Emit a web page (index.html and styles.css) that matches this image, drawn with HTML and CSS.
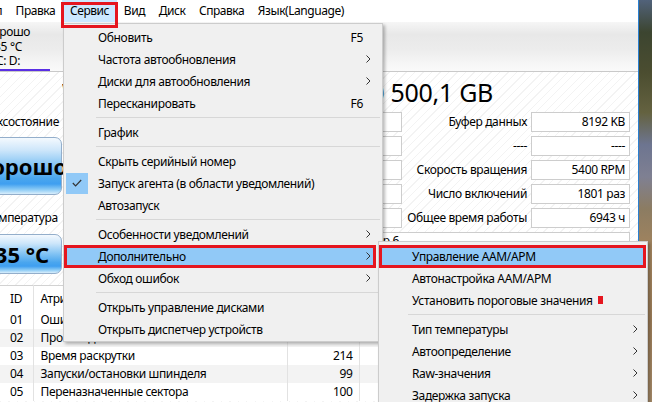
FILE: index.html
```html
<!DOCTYPE html>
<html lang="ru">
<head>
<meta charset="utf-8">
<title>CrystalDiskInfo</title>
<link rel="stylesheet" href="styles.css">
</head>
<body>
<div class="screen">
  <div class="window">
    <div class="menubar">
      <span class="mi first">Файл</span>
      <span class="mi">Правка</span>
      <span class="mi active">Сервис</span>
      <span class="mi">Вид</span>
      <span class="mi">Диск</span>
      <span class="mi">Справка</span>
      <span class="mi">Язык(Language)</span>
    </div>
    <div class="toolbar">
      <div class="disk">
        <span>Хорошо</span>
        <span>35 °C</span>
        <span>C: D:</span>
        <div class="bar"></div>
      </div>
    </div>
    <div class="main">
      <div class="top">
        <div class="status">
          <div class="slabel">Техсостояние</div>
          <div class="sbtn big">Хорошо</div>
          <div class="slabel t2">Температура</div>
          <div class="sbtn temp">35 °C</div>
        </div>
        <div class="info">
          <div class="title">WDC WD5000LPVX-22V0TT0 500,1 GB</div>
          <div class="grid">
            <div class="lab">Прошивка</div><div class="box c">01.01A01</div><div class="lab">Буфер данных</div><div class="box r">8192 KB</div>
            <div class="lab">Серийный номер</div><div class="box c">WD-WX11A1234567</div><div class="lab">----</div><div class="box r">----</div>
            <div class="lab">Интерфейс</div><div class="box c">Serial ATA</div><div class="lab">Скорость вращения</div><div class="box r">5400 RPM</div>
            <div class="lab">Режим передачи</div><div class="box c">SATA/600</div><div class="lab">Число включений</div><div class="box r">1801 раз</div>
            <div class="lab">Буква тома</div><div class="box c">C: D:</div><div class="lab">Общее время работы</div><div class="box r">6943 ч</div>
            <div class="lab">Стандарт</div><div class="box wide"><span class="clip">ATA8-ACS | ATA8-ACS вер 6</span></div>
          </div>
        </div>
      </div>
      <table class="smart">
        <colgroup><col class="c-id"><col class="c-attr"><col class="c-num"><col class="c-num"><col class="c-num"><col></colgroup>
        <thead>
          <tr><th>ID</th><th>Атрибут</th><th>Текущее</th><th>Наихудшее</th><th>Порог</th><th>Raw-значения</th></tr>
        </thead>
        <tbody>
          <tr><td>01</td><td>Ошибки чтения</td><td class="n">200</td><td class="n">200</td><td class="n">51</td><td class="n">000000000000</td></tr>
          <tr class="alt"><td>02</td><td>Производительность</td><td class="n">100</td><td class="n">100</td><td class="n">0</td><td class="n">000000000000</td></tr>
          <tr><td>03</td><td>Время раскрутки</td><td class="n">214</td><td class="n">211</td><td class="n">21</td><td class="n">000000000BB8</td></tr>
          <tr class="alt"><td>04</td><td>Запуски/остановки шпинделя</td><td class="n">99</td><td class="n">99</td><td class="n">0</td><td class="n">000000000709</td></tr>
          <tr><td>05</td><td>Переназначенные сектора</td><td class="n">100</td><td class="n">100</td><td class="n">140</td><td class="n">000000000000</td></tr>
        </tbody>
      </table>
    </div>
  </div>
  <div class="desktop"></div>
</div>

<div class="menu dropdown">
  <div class="item"><span class="chk"></span><span class="lbl">Обновить</span><span class="key">F5</span><span class="arr"></span></div>
  <div class="item"><span class="chk"></span><span class="lbl">Частота автообновления</span><span class="arr"><svg width="5" height="8" viewBox="0 0 5 8"><path d="M0.5 0.5 L4 4 L0.5 7.5" fill="none" stroke="#333" stroke-width="1"/></svg></span></div>
  <div class="item"><span class="chk"></span><span class="lbl">Диски для автообновления</span><span class="arr"><svg width="5" height="8" viewBox="0 0 5 8"><path d="M0.5 0.5 L4 4 L0.5 7.5" fill="none" stroke="#333" stroke-width="1"/></svg></span></div>
  <div class="item"><span class="chk"></span><span class="lbl">Пересканировать</span><span class="key">F6</span><span class="arr"></span></div>
  <div class="sep"></div>
  <div class="item"><span class="chk"></span><span class="lbl">График</span><span class="arr"></span></div>
  <div class="sep"></div>
  <div class="item"><span class="chk"></span><span class="lbl">Скрыть серийный номер</span><span class="arr"></span></div>
  <div class="item"><span class="chk"><span class="cbox"><svg width="10" height="8" viewBox="0 0 10 8"><path d="M0.8 4 L3.6 6.8 L9.2 1" fill="none" stroke="#333" stroke-width="1.2"/></svg></span></span><span class="lbl">Запуск агента (в области уведомлений)</span><span class="arr"></span></div>
  <div class="item"><span class="chk"></span><span class="lbl">Автозапуск</span><span class="arr"></span></div>
  <div class="sep"></div>
  <div class="item"><span class="chk"></span><span class="lbl">Особенности уведомлений</span><span class="arr"><svg width="5" height="8" viewBox="0 0 5 8"><path d="M0.5 0.5 L4 4 L0.5 7.5" fill="none" stroke="#333" stroke-width="1"/></svg></span></div>
  <div class="item hot"><span class="chk"></span><span class="lbl">Дополнительно</span><span class="arr"><svg width="5" height="8" viewBox="0 0 5 8"><path d="M0.5 0.5 L4 4 L0.5 7.5" fill="none" stroke="#333" stroke-width="1"/></svg></span></div>
  <div class="item"><span class="chk"></span><span class="lbl">Обход ошибок</span><span class="arr"><svg width="5" height="8" viewBox="0 0 5 8"><path d="M0.5 0.5 L4 4 L0.5 7.5" fill="none" stroke="#333" stroke-width="1"/></svg></span></div>
  <div class="sep"></div>
  <div class="item"><span class="chk"></span><span class="lbl">Открыть управление дисками</span><span class="arr"></span></div>
  <div class="item"><span class="chk"></span><span class="lbl">Открыть диспетчер устройств</span><span class="arr"></span></div>
</div>

<div class="menu submenu">
  <div class="item hot"><span class="lbl">Управление AAM/APM</span><span class="arr"></span></div>
  <div class="item"><span class="lbl">Автонастройка AAM/APM</span><span class="arr"></span></div>
  <div class="item"><span class="lbl">Установить пороговые значения<span class="mark"></span></span><span class="arr"></span></div>
  <div class="sep"></div>
  <div class="item"><span class="lbl">Тип температуры</span><span class="arr"><svg width="5" height="8" viewBox="0 0 5 8"><path d="M0.5 0.5 L4 4 L0.5 7.5" fill="none" stroke="#333" stroke-width="1"/></svg></span></div>
  <div class="item"><span class="lbl">Автоопределение</span><span class="arr"><svg width="5" height="8" viewBox="0 0 5 8"><path d="M0.5 0.5 L4 4 L0.5 7.5" fill="none" stroke="#333" stroke-width="1"/></svg></span></div>
  <div class="item"><span class="lbl">Raw-значения</span><span class="arr"><svg width="5" height="8" viewBox="0 0 5 8"><path d="M0.5 0.5 L4 4 L0.5 7.5" fill="none" stroke="#333" stroke-width="1"/></svg></span></div>
  <div class="item"><span class="lbl">Задержка запуска</span><span class="arr"><svg width="5" height="8" viewBox="0 0 5 8"><path d="M0.5 0.5 L4 4 L0.5 7.5" fill="none" stroke="#333" stroke-width="1"/></svg></span></div>
</div>
</body>
</html>
```

FILE: styles.css
```css
* { box-sizing: border-box; }
html, body { margin: 0; padding: 0; }
body {
  width: 652px;
  height: 402px;
  overflow: hidden;
  position: relative;
  font-family: "Noto Sans", "Open Sans", sans-serif;
  font-size: 12px;
  letter-spacing: -0.35px;
  color: #000;
  background: #8a7458;
}

.screen { display: flex; height: 402px; }

.window {
  width: 639px;
  flex: none;
  border-right: 1px solid #2a80d2;
  background: #fff;
  overflow: hidden;
  display: flex;
  flex-direction: column;
}

.desktop {
  flex: 1;
  background: linear-gradient(to bottom,
    #51627a 0%, #3c4530 8%, #4b4d30 18%, #646240 28%,
    #6d7590 36%, #7f8092 44%, #8c7c62 52%, #a2845e 62%,
    #9b7c58 80%, #a58a68 100%);
}

/* menubar */
.menubar {
  height: 22px;
  flex: none;
  display: flex;
  align-items: stretch;
  background: #fff;
  white-space: nowrap;
  letter-spacing: -0.45px;
}
.mi { padding: 0 6.8px; line-height: 22px; }
.mi.first { margin-left: -34px; }
.mi.active { background: #cce8ff; position: relative; padding: 0 8px; }
.mi.active::after {
  content: "";
  position: absolute;
  left: -1px; right: -1px; top: 2px; bottom: -6px;
  border: 3px solid #e5161f;
  z-index: 20;
}

/* toolbar with disk tab */
.toolbar {
  height: 50px;
  flex: none;
  border-bottom: 1px solid #c9c9c9;
  background: linear-gradient(to bottom, #f6f6f6 0%, #e8e8e8 25%, #ececec 55%, #f6f6f6 85%, #fafafa 100%);
  display: flex;
}
.disk {
  margin-left: -38px;
  width: 92px;
  display: flex;
  flex-direction: column;
  align-items: center;
  padding-top: 3px;
  line-height: 14.5px;
}
.disk .bar {
  margin-top: auto;
  align-self: stretch;
  margin-right: 4px;
  height: 2px;
  background: #5a2fe4;
}

/* main */
.main {
  flex: 1;
  background: repeating-linear-gradient(135deg, #ffffff 0 5px, #f3f3f3 5px 6px);
}
.top { display: flex; height: 213px; }

.status {
  width: 80px;
  margin-left: -18px;
  flex: none;
  padding-top: 40px;
  display: flex;
  flex-direction: column;
  align-items: stretch;
  text-align: center;
}
.slabel { height: 19px; line-height: 19px; }
.slabel.t2 { margin-top: 13px; }
.sbtn {
  border: 1px solid #93aecb;
  border-radius: 7px;
  font-weight: bold;
  letter-spacing: 0;
  background: linear-gradient(to bottom, #f4f9fe 0%, #cde6fa 22%, #86c5f4 48%, #4aa6ee 72%, #3f9ff0 82%, #8ccbf5 92%, #d9eefc 100%);
  display: flex;
  align-items: center;
  justify-content: center;
}
.sbtn.big { height: 58px; margin-top: 6px; font-size: 22px; }
.sbtn.temp { height: 40px; margin-top: 7px; font-size: 22px; }

.info { flex: 1; min-width: 0; padding-top: 6px; padding-right: 8px; }
.title {
  font-size: 25px;
  letter-spacing: -0.3px;
  line-height: 28px;
  height: 28px;
  text-align: right;
  padding-right: 144px;
  white-space: nowrap;
  overflow: hidden;
  margin-bottom: 6px;
}
.grid {
  display: grid;
  grid-template-columns: 100px minmax(0, 1fr) 124px 100px;
  grid-auto-rows: 20px;
  row-gap: 4px;
  column-gap: 2px;
}
.grid .lab { text-align: right; line-height: 20px; white-space: nowrap; overflow: hidden; padding-right: 1px; min-width: 0; }
.grid .box {
  background: #fff;
  border: 1px solid #cdcdcd;
  line-height: 18px;
  white-space: nowrap;
  overflow: hidden;
  padding: 0 4px;
  min-width: 0;
}
.grid .box.r { text-align: right; margin-left: 1px; }
.grid .box.c { text-align: center; }
.grid .box.wide { grid-column: 2 / 5; display: flex; line-height: 16px; }
.grid .box.wide .clip { width: 200px; flex: none; text-align: right; overflow: hidden; margin-left: auto; margin-right: 226px; }

/* table */
.smart {
  border-collapse: collapse;
  table-layout: fixed;
  width: 638px;
  background: transparent;
}
.smart col.c-id { width: 33px; }
.smart col.c-attr { width: 254px; }
.smart col.c-num { width: 72px; }
.smart th, .smart td {
  font-weight: normal;
  text-align: left;
  white-space: nowrap;
  overflow: hidden;
  padding: 0 6px 0 7px;
  border-left: 1px solid #e2e2e2;
}
.smart th:first-child, .smart td:first-child { border-left: none; padding-left: 10px; }
.smart thead tr { height: 25px; border-top: 1px solid #d2d2d2; background: #fff; }
.smart tbody tr { height: 18px; background: #fff; }
.smart tbody tr.alt { background: #f3f3f3; }
.smart td.n { text-align: right; }

/* menus */
.menu {
  position: absolute;
  background: #f0f0f0;
  border: 1px solid #cccccc;
  box-shadow: 2px 2px 3px rgba(0, 0, 0, 0.28);
  z-index: 10;
  white-space: nowrap;
}
.dropdown { left: 63px; top: 23px; width: 320px; padding: 2px 0 1px; }
.submenu { left: 378px; top: 241px; width: 270px; padding: 3px 0 0; }

.item {
  height: 22px;
  display: flex;
  align-items: center;
  position: relative;
  z-index: 0;
}
.item .chk {
  width: 34px;
  flex: none;
  align-self: stretch;
  display: flex;
  align-items: center;
  padding-left: 2px;
}
.cbox {
  width: 22px;
  height: 21px;
  background: #91c9f7;
  display: flex;
  align-items: center;
  justify-content: center;
}
.item .lbl { flex: 1; display: flex; align-items: center; }
.item .key { flex: none; }
.item .arr { width: 19px; flex: none; display: flex; align-items: center; padding-left: 3px; }
.submenu .item { padding-left: 33px; }
.submenu .item .arr { width: 16px; padding-left: 2px; }

.item.hot::before {
  content: "";
  position: absolute;
  left: 0; top: 0; bottom: -1px; right: 6px;
  background: #91c9f7;
  border: 3px solid #e5161f;
  z-index: -1;
}
.submenu .item.hot::before { right: 1px; }

.mark {
  display: inline-block;
  width: 5px;
  height: 8px;
  background: #e5161f;
  margin-left: 5px;
}

.sep {
  height: 7px;
  display: flex;
  align-items: center;
  padding-left: 32px;
  padding-right: 2px;
}
.sep::before { content: ""; flex: 1; height: 1px; background: #d7d7d7; }
.submenu .sep { padding-left: 29px; }
```
